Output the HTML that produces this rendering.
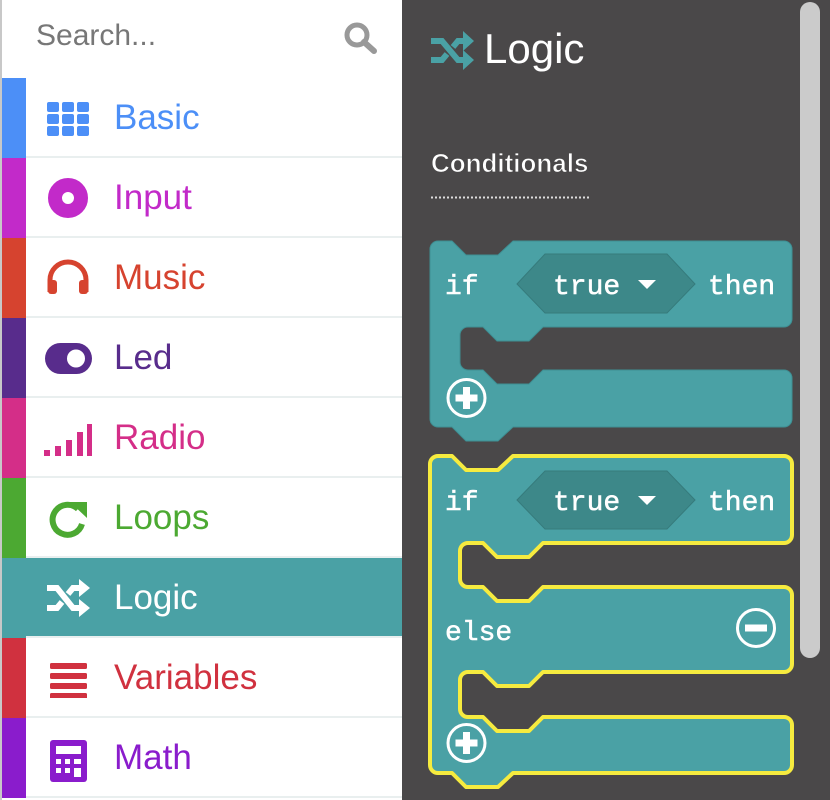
<!DOCTYPE html>
<html><head><meta charset="utf-8"><style>
html,body{margin:0;padding:0;width:830px;height:800px;overflow:hidden;background:#4a4849;font-family:"Liberation Sans",sans-serif}
#left{position:absolute;left:0;top:0;width:402px;height:800px;background:#fff;border-left:2px solid #c8c8c8;box-sizing:border-box}
.search{position:absolute;left:34px;top:19px;font-size:30px;color:#777}
.row{position:absolute;left:0;width:400px;height:80px}
.row .bar{position:absolute;left:0;top:0;width:24px;height:80px}
.row .sep{position:absolute;left:24px;right:0;bottom:0;height:2px;background:#e9efef}
.row .lbl{position:absolute;left:112px;top:20px;font-size:35px;line-height:40px}
.row svg{position:absolute;left:40px;top:20px}
</style></head><body>
<div id="left">
<div class="search">Search...</div>
<svg style="position:absolute;left:341px;top:21px" width="36" height="34" viewBox="0 0 36 34"><circle cx="14" cy="14" r="10" fill="none" stroke="#999" stroke-width="5"/><line x1="21" y1="21" x2="31" y2="30" stroke="#999" stroke-width="6" stroke-linecap="round"/></svg>

<div class="row" style="top:78px"><div class="bar" style="background:#4c8ff7"></div><div class="sep"></div>
<svg width="50" height="40" viewBox="0 0 50 40"><g fill="#4c8ff7"><rect x="5" y="4" width="12" height="10" rx="2"/><rect x="20" y="4" width="12" height="10" rx="2"/><rect x="35" y="4" width="12" height="10" rx="2"/><rect x="5" y="16" width="12" height="10" rx="2"/><rect x="20" y="16" width="12" height="10" rx="2"/><rect x="35" y="16" width="12" height="10" rx="2"/><rect x="5" y="28" width="12" height="10" rx="2"/><rect x="20" y="28" width="12" height="10" rx="2"/><rect x="35" y="28" width="12" height="10" rx="2"/></g></svg>
<div class="lbl" style="color:#4c8ff7">Basic</div></div>

<div class="row" style="top:158px"><div class="bar" style="background:#c22ac9"></div><div class="sep"></div>
<svg width="50" height="40" viewBox="0 0 50 40"><circle cx="26" cy="20" r="13" fill="none" stroke="#c22ac9" stroke-width="14"/></svg>
<div class="lbl" style="color:#c22ac9">Input</div></div>

<div class="row" style="top:238px"><div class="bar" style="background:#d6432f"></div><div class="sep"></div>
<svg width="50" height="40" viewBox="0 0 50 40"><path d="M8,34 V22 a18,18 0 0 1 36,0 V34" fill="none" stroke="#d6432f" stroke-width="5"/><rect x="6" y="22" width="9" height="14" rx="3" fill="#d6432f"/><rect x="37" y="22" width="9" height="14" rx="3" fill="#d6432f"/></svg>
<div class="lbl" style="color:#d6432f">Music</div></div>

<div class="row" style="top:318px"><div class="bar" style="background:#582c8c"></div><div class="sep"></div>
<svg width="50" height="40" viewBox="0 0 50 40"><rect x="3" y="5" width="47" height="31" rx="15.5" fill="#582c8c"/><circle cx="34" cy="20.5" r="9" fill="#fff"/></svg>
<div class="lbl" style="color:#582c8c">Led</div></div>

<div class="row" style="top:398px"><div class="bar" style="background:#d42e88"></div><div class="sep"></div>
<svg width="50" height="44" viewBox="0 0 50 44"><g fill="#d42e88"><rect x="2" y="32" width="6" height="6"/><rect x="13" y="28" width="6" height="10"/><rect x="24" y="22" width="6" height="16"/><rect x="35" y="14" width="6" height="24"/><rect x="45" y="6" width="6" height="32"/></g></svg>
<div class="lbl" style="color:#d42e88">Radio</div></div>

<div class="row" style="top:478px"><div class="bar" style="background:#4ca932"></div><div class="sep"></div>
<svg width="50" height="40" viewBox="0 0 50 40"><path d="M36,11 A15,15 0 1 0 40,26" fill="none" stroke="#4ca932" stroke-width="6"/><path d="M28,4 H45 V20 Z" fill="#4ca932"/></svg>
<div class="lbl" style="color:#4ca932">Loops</div></div>

<div class="row" style="top:558px;background:#4aa1a5;left:0"><div class="sep" style="background:#e9efef"></div>
<svg width="50" height="40" viewBox="0 0 50 40"><g fill="none" stroke="#fff" stroke-width="6"><path d="M5,10 H15 L31,30 H40"/><path d="M5,30 H15 L20,24 M26,16 L31,10 H40"/></g><path d="M37,1 L48,10 L37,19 Z M37,21 L48,30 L37,39 Z" fill="#fff"/></svg>
<div class="lbl" style="color:#fff">Logic</div></div>

<div class="row" style="top:638px"><div class="bar" style="background:#d0313f"></div><div class="sep"></div>
<svg width="50" height="40" viewBox="0 0 50 40"><g fill="#d0313f"><rect x="8" y="5" width="37" height="6" rx="1.5"/><rect x="8" y="15" width="37" height="6" rx="1.5"/><rect x="8" y="25" width="37" height="6" rx="1.5"/><rect x="8" y="35" width="37" height="6" rx="1.5"/></g></svg>
<div class="lbl" style="color:#d0313f">Variables</div></div>

<div class="row" style="top:718px"><div class="bar" style="background:#8a1ccc"></div><div class="sep"></div>
<svg width="50" height="44" viewBox="0 0 50 44"><rect x="8" y="2" width="37" height="42" rx="3" fill="#8a1ccc"/><rect x="14" y="8" width="25" height="8" fill="#fff"/><g fill="#fff"><rect x="14" y="21" width="5" height="5"/><rect x="23" y="21" width="5" height="5"/><rect x="32" y="21" width="7" height="5"/><rect x="14" y="30" width="5" height="5"/><rect x="23" y="30" width="5" height="5"/><rect x="32" y="30" width="7" height="9"/></g></svg>
<div class="lbl" style="color:#8a1ccc">Math</div></div>
</div>

<svg style="position:absolute;left:0;top:0" width="830" height="800" viewBox="0 0 830 800">
<rect x="800" y="2" width="20" height="656" rx="10" fill="#cbcbcb"/>
<g fill="none" stroke="#4aa1a5" stroke-width="6"><path d="M431,41 H442 L458,60 H466"/><path d="M431,60 H442 L447,54 M453,47 L458,41 H466"/></g>
<path d="M463,31 L474,41 L463,51 Z M463,50 L474,60 L463,70 Z" fill="#4aa1a5"/>
<text x="484" y="63" font-size="42" fill="#fff" font-family="Liberation Sans">Logic</text>
<text x="431" y="172" font-size="26" fill="#fff" font-family="Liberation Sans" font-weight="bold" stroke="#4a4849" stroke-width="0.8">Conditionals</text>
<line x1="431" y1="197.5" x2="590" y2="197.5" stroke="#ddd" stroke-width="2" stroke-dasharray="2,2"/>

<path d="M430,249 a8,8 0 0 1 8,-8 H452 L466,255 H498 L513,241 H784 a8,8 0 0 1 8,8 V319 a8,8 0 0 1 -8,8 H543 L529,341 H497 L483,327 H468 a8,8 0 0 0 -8,8 V362 a8,8 0 0 0 8,8 H483 L497,384 H529 L543,370 H784 a8,8 0 0 1 8,8 V419 a8,8 0 0 1 -8,8 H513 L498,441 H466 L452,427 H438 a8,8 0 0 1 -8,-8 Z" fill="#4aa1a5" stroke="#3e9094" stroke-width="1"/>
<path d="M517,284 L545,254 H667 L695,284 L667,313 H545 Z" fill="#3d8889" stroke="#367b7c"/>
<path d="M638,280 H656 L647,289 Z" fill="#fff"/>
<circle cx="466.5" cy="398" r="18.5" fill="none" stroke="#fff" stroke-width="3"/>
<path d="M463,387 h7 v7.5 h7.5 v7 h-7.5 v7.5 h-7 v-7.5 h-7.5 v-7 h7.5 Z" fill="#fff"/>

<path d="M430,464 a8,8 0 0 1 8,-8 H452 L466,470 H498 L513,456 H784 a8,8 0 0 1 8,8 V535 a8,8 0 0 1 -8,8 H543 L529,557 H497 L483,543 H468 a8,8 0 0 0 -8,8 V579 a8,8 0 0 0 8,8 H483 L497,601 H529 L543,587 H784 a8,8 0 0 1 8,8 V664 a8,8 0 0 1 -8,8 H543 L529,686 H497 L483,672 H468 a8,8 0 0 0 -8,8 V709 a8,8 0 0 0 8,8 H483 L497,731 H529 L543,717 H784 a8,8 0 0 1 8,8 V765 a8,8 0 0 1 -8,8 H513 L498,787 H466 L452,773 H438 a8,8 0 0 1 -8,-8 Z" fill="#4aa1a5" stroke="#f6eb3f" stroke-width="4" stroke-linejoin="round"/>
<path d="M517,500 L545,471 H667 L695,500 L667,529 H545 Z" fill="#3d8889" stroke="#367b7c"/>
<path d="M638,496 H656 L647,505 Z" fill="#fff"/>
<circle cx="756" cy="628" r="18.5" fill="none" stroke="#fff" stroke-width="3"/>
<rect x="745" y="624.5" width="22" height="7" fill="#fff"/>
<circle cx="466.5" cy="743" r="18.5" fill="none" stroke="#fff" stroke-width="3"/>
<path d="M463,732 h7 v7.5 h7.5 v7 h-7.5 v7.5 h-7 v-7.5 h-7.5 v-7 h7.5 Z" fill="#fff"/>

<g font-family="Liberation Mono" font-size="28" fill="#fff" stroke="#fff" stroke-width="0.5">
<text x="445" y="294">if</text><text x="553" y="294">true</text><text x="708" y="294">then</text>
<text x="445" y="510">if</text><text x="553" y="510">true</text><text x="708" y="510">then</text>
<text x="445" y="640">else</text>
</g>
</svg>
</body></html>
